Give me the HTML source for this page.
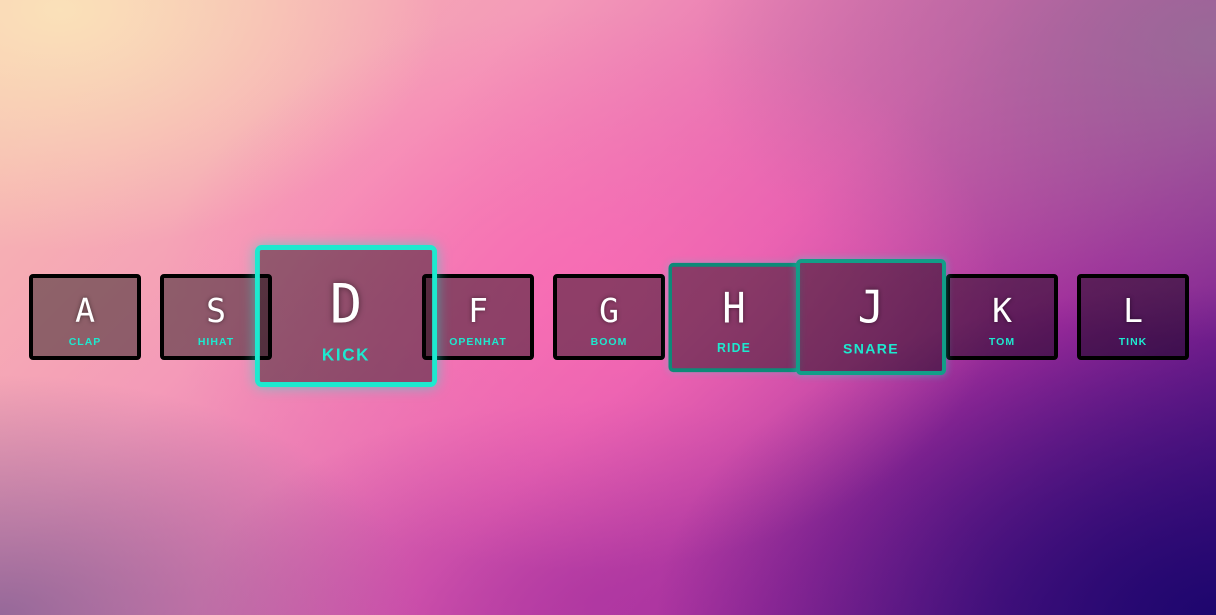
<!DOCTYPE html>
<html><head><meta charset="utf-8"><style>
html,body{margin:0;padding:0;width:1216px;height:615px;overflow:hidden}
body{position:relative;
background:
radial-gradient(ellipse 420px 280px at 580px 290px, rgba(255,105,180,0.7), rgba(255,105,180,0) 100%),
radial-gradient(ellipse 380px 240px at 60px 10px, rgba(250,225,185,1), rgba(250,225,185,0) 100%),
radial-gradient(ellipse 520px 300px at 1216px 40px, rgba(150,110,150,0.9), rgba(150,110,150,0) 100%),
radial-gradient(ellipse 560px 330px at 1216px 615px, rgba(30,6,110,1), rgba(60,10,120,0) 100%),
radial-gradient(ellipse 420px 240px at 0px 615px, rgba(140,100,150,0.9), rgba(140,100,150,0) 100%),
radial-gradient(ellipse 400px 200px at 600px 600px, rgba(170,50,160,0.7), rgba(170,50,160,0) 100%),
linear-gradient(135deg,#f8c0b0 0%,#f49ab8 30%,#e060b0 55%,#a02c9c 75%,#4a1080 100%);
font-family:"Liberation Sans",sans-serif}
.k{position:absolute;top:274px;width:112px;height:86px;box-sizing:border-box;border:4px solid #000;border-radius:4px;background:rgba(0,0,0,0.42);text-align:center;transform-origin:center}
.k b{display:block;font-family:"DejaVu Sans Mono","Liberation Mono",monospace;font-weight:normal;color:#fff;font-size:33px;line-height:34px;margin-top:16px;text-shadow:0 0 4px rgba(0,0,0,.5)}
.k span{display:block;color:#1de9cf;font-size:10.5px;font-weight:bold;letter-spacing:1px;margin-top:8px}
</style></head><body>
<div class="k" style="left:29px"><b>A</b><span>CLAP</span></div>
<div class="k" style="left:160px"><b>S</b><span>HIHAT</span></div>
<div class="k" style="left:422px"><b>F</b><span>OPENHAT</span></div>
<div class="k" style="left:553px"><b>G</b><span>BOOM</span></div>
<div class="k" style="left:946px"><b>K</b><span>TOM</span></div>
<div class="k" style="left:1077px"><b>L</b><span>TINK</span></div>
<div class="k" style="left:678px;top:274px;transform:translateY(0.5px) scale(1.17,1.27);border-color:#0d8a78;border-width:3.5px;box-shadow:0 0 6px rgba(29,233,207,.3)"><b>H</b><span>RIDE</span></div>
<div class="k" style="left:815px;transform:scale(1.34,1.35);border-color:#119e88;border-width:3px;background:rgba(0,0,0,0.44);box-shadow:0 0 6px rgba(29,233,207,.4)"><b>J</b><span>SNARE</span></div>
<div class="k" style="left:290px;transform:translateY(-1px) scale(1.625,1.65);border-color:#1de9cf;border-width:3.5px;box-shadow:0 0 8px rgba(29,233,207,.6);background:rgba(0,0,0,0.4)"><b>D</b><span>KICK</span></div>
</body></html>
